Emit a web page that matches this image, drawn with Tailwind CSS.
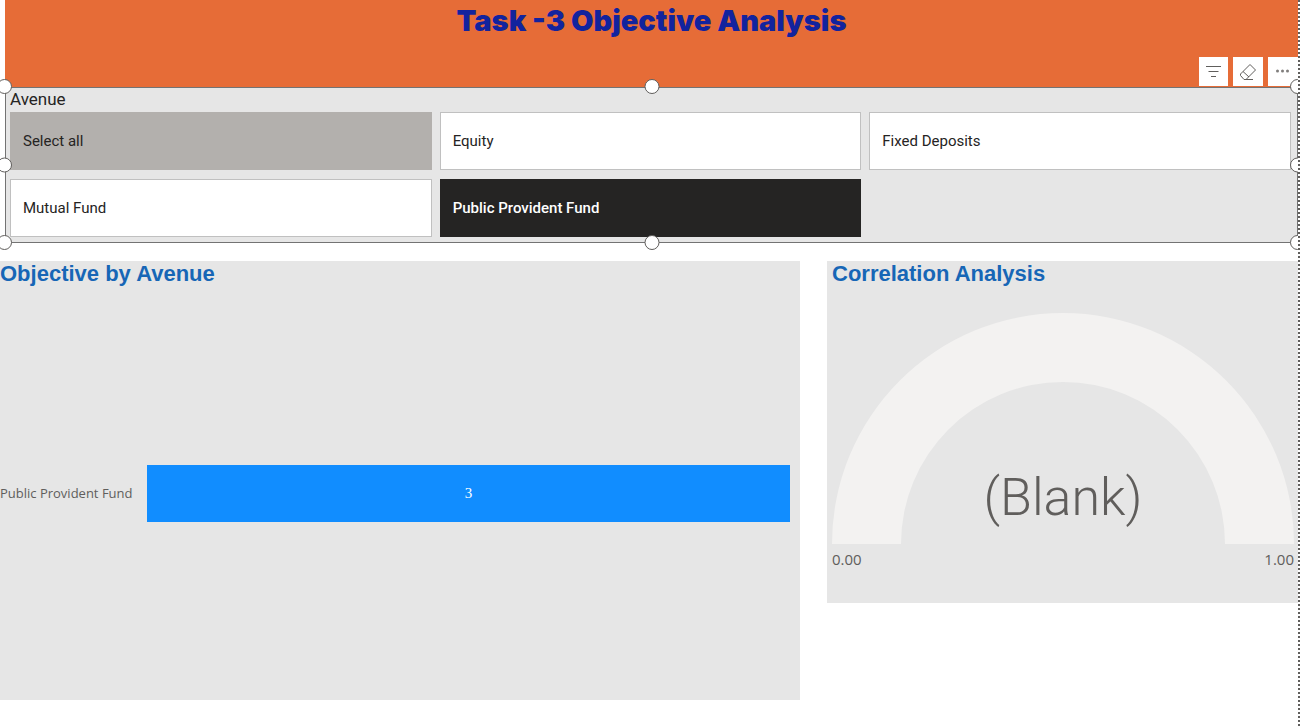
<!DOCTYPE html>
<html lang="en">
<head>
<meta charset="utf-8">
<meta name="viewport" content="width=device-width, initial-scale=1">
<title>Task -3 Objective Analysis</title>
<script src="https://cdn.jsdelivr.net/npm/@tailwindcss/browser@4"></script>
</head>
<body class="bg-white font-['Roboto',sans-serif]">
<div class="relative min-h-screen overflow-hidden pr-[2px]">
  <header class="ml-[5px] flex h-[87px] flex-col items-center justify-between bg-[#e66c37]">
    <h1 class="pt-px font-['Inter',sans-serif] text-[29px] leading-10 font-black text-[#12239e]">Task -3 Objective Analysis</h1>
    <div class="mb-px flex gap-[5px] self-end">
      <button type="button" aria-label="Filters" class="flex h-[29px] w-[29px] items-center justify-center bg-white">
        <svg class="h-4 w-4" viewBox="0 0 16 16" fill="none" stroke="#605e5c" stroke-width="1"><path d="M0 2.500h15M2.500 7.500h10M5 12.500h5"/></svg>
      </button>
      <button type="button" aria-label="Clear selections" class="flex h-[29px] w-[30px] items-center justify-center bg-white">
        <svg class="h-[18px] w-[18px]" viewBox="0 0 18 18" fill="none" stroke="#605e5c" stroke-width="1"><path d="M11 1.500 16.500 7 7 16.500H5L1.500 12.500V11zM4 8.500l6 5.500M7 16.500h7"/></svg>
      </button>
      <button type="button" aria-label="More options" class="flex h-[29px] w-[30px] items-center justify-center bg-white">
        <svg class="h-4 w-4" viewBox="0 0 16 16" fill="#807e7c"><circle cx="2.500" cy="7" r="1.500"/><circle cx="7.500" cy="7" r="1.500"/><circle cx="12.500" cy="7" r="1.500"/></svg>
      </button>
    </div>
  </header>

  <section aria-labelledby="avenue" class="relative ml-[5px] border border-[#737373] bg-[#e6e6e6] pt-px pr-[6px] pb-[5px] pl-1 text-[#252423]">
    <h2 id="avenue" class="h-[23px] text-[17px] leading-5">Avenue</h2>
    <div class="grid grid-cols-3 gap-x-2 gap-y-[9px] text-[15px]">
      <button type="button" aria-pressed="false" class="h-[58px] bg-[#b3b0ad] px-[13px] text-left">Select all</button>
      <button type="button" aria-pressed="false" class="h-[58px] border border-[#c0c0c0] bg-white px-3 text-left">Equity</button>
      <button type="button" aria-pressed="false" class="h-[58px] border border-[#c0c0c0] bg-white px-3 text-left">Fixed Deposits</button>
      <button type="button" aria-pressed="false" class="h-[58px] border border-[#c0c0c0] bg-white px-3 text-left">Mutual Fund</button>
      <button type="button" aria-pressed="true" class="h-[58px] bg-[#252423] px-[13px] text-left font-medium text-white">Public Provident Fund</button>
    </div>
    <span class="absolute -top-[9px] -left-[9px] size-[15px] rounded-full border border-[#605e5c] bg-white"></span>
    <span class="absolute -top-[9px] left-1/2 size-[15px] -translate-x-1/2 rounded-full border border-[#605e5c] bg-white"></span>
    <span class="absolute -top-[9px] -right-2 size-[15px] rounded-full border border-[#605e5c] bg-white"></span>
    <span class="absolute top-1/2 -left-[9px] size-[15px] -translate-y-1/2 rounded-full border border-[#605e5c] bg-white"></span>
    <span class="absolute top-1/2 -right-2 size-[15px] -translate-y-1/2 rounded-full border border-[#605e5c] bg-white"></span>
    <span class="absolute -bottom-2 -left-[9px] size-[15px] rounded-full border border-[#605e5c] bg-white"></span>
    <span class="absolute -bottom-2 left-1/2 size-[15px] -translate-x-1/2 rounded-full border border-[#605e5c] bg-white"></span>
    <span class="absolute -right-2 -bottom-2 size-[15px] rounded-full border border-[#605e5c] bg-white"></span>
  </section>

  <main class="mt-[18px] grid grid-cols-[800fr_471fr] items-start gap-[27px]">
    <section class="bg-[#e6e6e6] pt-px pb-[178px]">
      <h2 class="font-['Liberation_Sans',Arial,sans-serif] text-[22px] leading-6 font-bold text-[#1766b6]">Objective by Avenue</h2>
      <div class="mt-[179px] flex items-center gap-4 pr-[10px]">
        <span class="w-[131px] font-['Open_Sans',sans-serif] text-[13px] whitespace-nowrap text-[#605e5c]">Public Provident Fund</span>
        <div class="flex h-[57px] flex-1 items-center justify-center bg-[#118dff] font-['Liberation_Serif',serif] text-[15px] text-white">3</div>
      </div>
    </section>
    <section class="bg-[#e6e6e6] pt-px pr-1 pb-[33px] pl-[5px]">
      <h2 class="font-['Liberation_Sans',Arial,sans-serif] text-[22px] leading-6 font-bold text-[#1766b6]">Correlation Analysis</h2>
      <div class="relative mt-[27px]">
        <svg class="block w-full" viewBox="0 0 462 231" fill="#f3f2f1" aria-hidden="true"><path d="M0 231a231 231 0 0 1 462 0h-69a162 162 0 0 0-324 0z"/></svg>
        <div class="absolute inset-x-0 bottom-0 text-center text-[52px] leading-[92px] font-light text-[#605e5c]">(Blank)</div>
      </div>
      <div class="flex justify-between pt-1 font-['Open_Sans',sans-serif] text-[15px] leading-[22px] text-[#605e5c]"><span>0.00</span><span>1.00</span></div>
    </section>
  </main>
  <div class="absolute inset-y-0 right-0 w-[2px] bg-[repeating-linear-gradient(to_bottom,#605e5c_0_2px,#fff_2px_4px)]"></div>
</div>
</body>
</html>
